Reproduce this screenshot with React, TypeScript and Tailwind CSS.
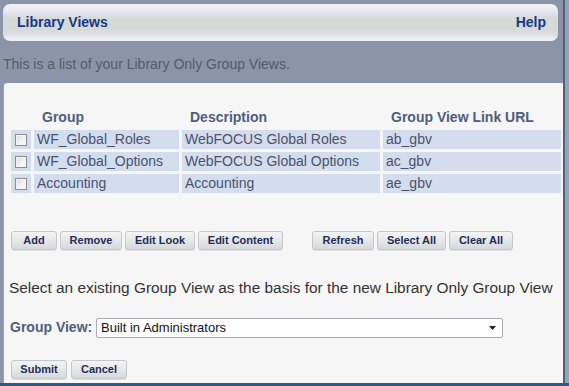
import React from "react";

const rows = [
  ["WF_Global_Roles", "WebFOCUS Global Roles", "ab_gbv"],
  ["WF_Global_Options", "WebFOCUS Global Options", "ac_gbv"],
  ["Accounting", "Accounting", "ae_gbv"],
];

function Btn({ label, w }: { label: string; w: string }) {
  return (
    <button
      className={`${w} h-[19px] rounded-[3px] border border-[#c3c7c9] bg-[linear-gradient(to_bottom,#f4f4f4_0%,#e8e9e9_45%,#d6d9da_100%)] text-[11px] font-bold leading-none text-[#1f2d5c] shadow-[0_1px_0_#e2e2e2]`}
    >
      {label}
    </button>
  );
}

function Checkbox() {
  return (
    <span className="block w-[12px] h-[12px] border border-[#8e8f8f] bg-[linear-gradient(135deg,#dcdcdc_0%,#f4f4f4_60%,#ffffff_100%)] shadow-[inset_0_0_0_1px_#f3f3f3]" />
  );
}

export default function App() {
  return (
    <div className="w-full h-[386px] flex flex-col bg-[#8b95a7] font-['Liberation_Sans',Arial,sans-serif] overflow-hidden">
      <div className="flex-1 flex min-h-0">
        <div className="flex-1 flex flex-col min-w-0">
          <div className="pl-[3px] pr-[5px] pt-[4px]">
            <div className="h-[37px] rounded-[7px] pl-[14px] pr-[12px] flex items-center justify-between bg-[linear-gradient(to_bottom,#f1f1f1_0%,#ececf2_14%,#e3e3ee_24%,#d6dbd8_38%,#d6dbd8_70%,#dfdde8_82%,#ebebf0_92%,#f3f3f3_100%)]">
              <span className="text-[14px] font-bold text-[#17368c]">Library Views</span>
              <span className="text-[14px] font-bold text-[#17368c]">Help</span>
            </div>
          </div>
          <p className="mt-[15px] pl-[3px] text-[14px] leading-[16px] text-[#525c6b]">
            This is a list of your Library Only Group Views.
          </p>
          <div className="mt-[11px] ml-[3px] flex-1 bg-[#f6f6f6] border-l border-[#9ea3ab] rounded-tl-[4px] flex flex-col pt-[25px]">
            <div className="pl-[7px] grid grid-cols-[20px_145px_198px_178px] gap-x-[3px] gap-y-[3px] auto-rows-[19px]">
              <div />
              <div className="pl-[8px] text-[14px] font-bold text-[#4e5e7c] leading-[19px]">Group</div>
              <div className="pl-[8px] text-[14px] font-bold text-[#4e5e7c] leading-[19px]">Description</div>
              <div className="pl-[8px] text-[14px] font-bold text-[#4e5e7c] leading-[19px]">Group View Link URL</div>
              {rows.map((r) => (
                <React.Fragment key={r[0]}>
                  <div className="bg-[#d3ddee] flex items-center justify-center">
                    <Checkbox />
                  </div>
                  <div className="bg-[#d3ddee] pl-[3px] text-[14px] leading-[19px] text-[#4a5370]">{r[0]}</div>
                  <div className="bg-[#d3ddee] pl-[3px] text-[14px] leading-[19px] text-[#4a5370]">{r[1]}</div>
                  <div className="bg-[#d3ddee] pl-[3px] text-[14px] leading-[19px] text-[#4a5370]">{r[2]}</div>
                </React.Fragment>
              ))}
            </div>

            <div className="mt-[38px] pl-[7px] flex gap-[3px]">
              <Btn label="Add" w="w-[46px]" />
              <Btn label="Remove" w="w-[62px]" />
              <Btn label="Edit Look" w="w-[70px]" />
              <Btn label="Edit Content" w="w-[85px]" />
              <div className="w-[23px]" />
              <Btn label="Refresh" w="w-[62px]" />
              <Btn label="Select All" w="w-[69px]" />
              <Btn label="Clear All" w="w-[64px]" />
            </div>

            <p className="mt-[29px] pl-[5px] whitespace-nowrap text-[15.4px] leading-[18px] text-[#333333]">
              Select an existing Group View as the basis for the new Library Only Group View
            </p>

            <div className="mt-[20px] pl-[6px] flex items-center">
              <span className="w-[86px] text-[14px] font-bold text-[#4e5e7c]">Group View:</span>
              <div className="w-[407px] h-[20px] bg-white border border-[#a9abb0] rounded-[2px] flex items-center justify-between pl-[4px] pr-[6px]">
                <span className="text-[13px] text-[#111111]">Built in Administrators</span>
                <svg width="7" height="4" viewBox="0 0 7 4">
                  <path d="M0 0 L7 0 L3.5 4 Z" fill="#222" />
                </svg>
              </div>
            </div>

            <div className="mt-[22px] pl-[7px] flex gap-[4px]">
              <Btn label="Submit" w="w-[56px]" />
              <Btn label="Cancel" w="w-[56px]" />
            </div>
          </div>
        </div>
        <div className="w-[6px] border-l-2 border-[#4f617c] bg-[#8ea5bc]" />
      </div>
      <div className="h-[3px] bg-[#2f5b80]" />
    </div>
  );
}
